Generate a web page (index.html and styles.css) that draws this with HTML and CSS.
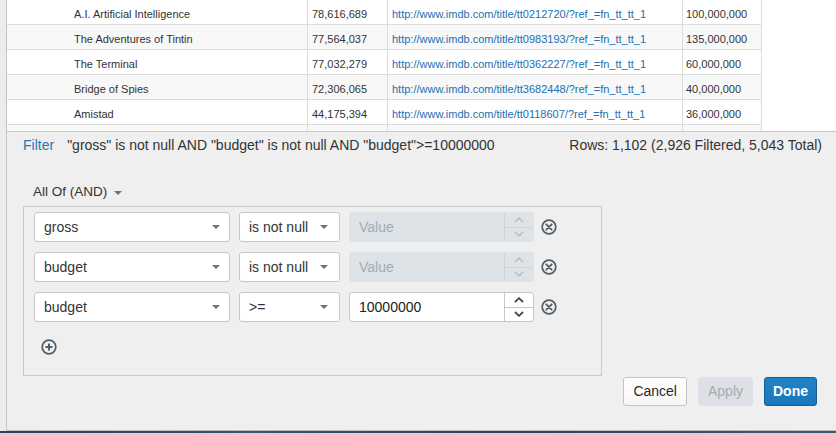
FILE: index.html
```html
<!DOCTYPE html>
<html lang="en">
<head>
<meta charset="utf-8">
<title>Filter</title>
<link rel="stylesheet" href="styles.css">
</head>
<body>
<div class="screen">
  <div class="window">
    <div class="gutter"></div>
    <div class="main">
      <div class="grid">
        <div class="row">
          <div class="cell c-title">A.I. Artificial Intelligence</div>
          <div class="cell c-num">78,616,689</div>
          <div class="cell c-link"><a>http://www.imdb.com/title/tt0212720/?ref_=fn_tt_tt_1</a></div>
          <div class="cell c-budget">100,000,000</div>
        </div>
        <div class="row stripe">
          <div class="cell c-title">The Adventures of Tintin</div>
          <div class="cell c-num">77,564,037</div>
          <div class="cell c-link"><a>http://www.imdb.com/title/tt0983193/?ref_=fn_tt_tt_1</a></div>
          <div class="cell c-budget">135,000,000</div>
        </div>
        <div class="row">
          <div class="cell c-title">The Terminal</div>
          <div class="cell c-num">77,032,279</div>
          <div class="cell c-link"><a>http://www.imdb.com/title/tt0362227/?ref_=fn_tt_tt_1</a></div>
          <div class="cell c-budget">60,000,000</div>
        </div>
        <div class="row stripe">
          <div class="cell c-title">Bridge of Spies</div>
          <div class="cell c-num">72,306,065</div>
          <div class="cell c-link"><a>http://www.imdb.com/title/tt3682448/?ref_=fn_tt_tt_1</a></div>
          <div class="cell c-budget">40,000,000</div>
        </div>
        <div class="row">
          <div class="cell c-title">Amistad</div>
          <div class="cell c-num">44,175,394</div>
          <div class="cell c-link"><a>http://www.imdb.com/title/tt0118607/?ref_=fn_tt_tt_1</a></div>
          <div class="cell c-budget">36,000,000</div>
        </div>
        <div class="row stripe">
          <div class="cell c-title"></div>
          <div class="cell c-num"></div>
          <div class="cell c-link"></div>
          <div class="cell c-budget"></div>
        </div>
      </div>

      <div class="panel">
        <div class="summary">
          <div class="expr"><span class="filter-label">Filter</span><span class="expr-text">"gross" is not null AND "budget" is not null AND "budget"&gt;=10000000</span></div>
          <div class="count">Rows: 1,102 (2,926 Filtered, 5,043 Total)</div>
        </div>

        <div class="logic">All Of (AND)<span class="caret caret-logic"></span></div>

        <div class="group">
          <div class="cond">
            <div class="select field-select"><span>gross</span><span class="caret"></span></div>
            <div class="select op-select"><span>is not null</span><span class="caret"></span></div>
            <div class="num disabled">
              <span class="num-value placeholder">Value</span>
              <span class="spin">
                <span class="spin-btn"><svg width="10" height="6" viewBox="0 0 10 6"><path d="M1 5 L5 1.2 L9 5" fill="none" stroke="currentColor" stroke-width="1.6"/></svg></span>
                <span class="spin-btn"><svg width="10" height="6" viewBox="0 0 10 6"><path d="M1 1 L5 4.8 L9 1" fill="none" stroke="currentColor" stroke-width="1.6"/></svg></span>
              </span>
            </div>
            <span class="remove"><svg width="16" height="16" viewBox="0 0 16 16"><circle cx="8" cy="8" r="6.8" fill="none" stroke="currentColor" stroke-width="1.7"/><path d="M5.3 5.3 L10.7 10.7 M10.7 5.3 L5.3 10.7" stroke="currentColor" stroke-width="1.8" stroke-linecap="round"/></svg></span>
          </div>
          <div class="cond">
            <div class="select field-select"><span>budget</span><span class="caret"></span></div>
            <div class="select op-select"><span>is not null</span><span class="caret"></span></div>
            <div class="num disabled">
              <span class="num-value placeholder">Value</span>
              <span class="spin">
                <span class="spin-btn"><svg width="10" height="6" viewBox="0 0 10 6"><path d="M1 5 L5 1.2 L9 5" fill="none" stroke="currentColor" stroke-width="1.6"/></svg></span>
                <span class="spin-btn"><svg width="10" height="6" viewBox="0 0 10 6"><path d="M1 1 L5 4.8 L9 1" fill="none" stroke="currentColor" stroke-width="1.6"/></svg></span>
              </span>
            </div>
            <span class="remove"><svg width="16" height="16" viewBox="0 0 16 16"><circle cx="8" cy="8" r="6.8" fill="none" stroke="currentColor" stroke-width="1.7"/><path d="M5.3 5.3 L10.7 10.7 M10.7 5.3 L5.3 10.7" stroke="currentColor" stroke-width="1.8" stroke-linecap="round"/></svg></span>
          </div>
          <div class="cond">
            <div class="select field-select"><span>budget</span><span class="caret"></span></div>
            <div class="select op-select"><span>&gt;=</span><span class="caret"></span></div>
            <div class="num">
              <span class="num-value">10000000</span>
              <span class="spin">
                <span class="spin-btn"><svg width="10" height="6" viewBox="0 0 10 6"><path d="M1 5 L5 1.2 L9 5" fill="none" stroke="currentColor" stroke-width="1.8"/></svg></span>
                <span class="spin-btn"><svg width="10" height="6" viewBox="0 0 10 6"><path d="M1 1 L5 4.8 L9 1" fill="none" stroke="currentColor" stroke-width="1.8"/></svg></span>
              </span>
            </div>
            <span class="remove"><svg width="16" height="16" viewBox="0 0 16 16"><circle cx="8" cy="8" r="6.8" fill="none" stroke="currentColor" stroke-width="1.7"/><path d="M5.3 5.3 L10.7 10.7 M10.7 5.3 L5.3 10.7" stroke="currentColor" stroke-width="1.8" stroke-linecap="round"/></svg></span>
          </div>
          <span class="add"><svg width="16" height="16" viewBox="0 0 16 16"><circle cx="8" cy="8" r="6.8" fill="none" stroke="currentColor" stroke-width="1.7"/><path d="M8 4.5 V11.5 M4.5 8 H11.5" stroke="currentColor" stroke-width="2"/></svg></span>
        </div>

        <div class="actions">
          <button class="btn btn-cancel">Cancel</button>
          <button class="btn btn-apply">Apply</button>
          <button class="btn btn-done">Done</button>
        </div>
      </div>
    </div>
  </div>
  <div class="taskbar"></div>
</div>
</body>
</html>
```

FILE: styles.css
```css
* { box-sizing: border-box; }

html, body {
  margin: 0;
  padding: 0;
}

body {
  width: 836px;
  height: 433px;
  overflow: hidden;
  font-family: "Liberation Sans", Arial, sans-serif;
  color: #333;
  background: #efefef;
}

.screen {
  display: flex;
  flex-direction: column;
  height: 433px;
}

.window {
  display: flex;
  height: 431px;
}

.gutter {
  width: 7px;
  background: #ececec;
  border-right: 1px solid #c6c6c6;
}

.main {
  flex: 1;
  display: flex;
  flex-direction: column;
  border-bottom: 1px solid #bdbdbd;
}

.taskbar {
  height: 2px;
  background: linear-gradient(90deg, #27445a, #35566e 30%, #2a4760 60%, #3a5a72);
}

/* ---------- data grid ---------- */
.grid {
  height: 131px;
  overflow: hidden;
  background: #fff;
}

.row {
  display: flex;
  width: 755px;
  height: 25px;
  border-bottom: 1px solid #dcdcdc;
  font-size: 11px;
  line-height: 20px;
}

.row.stripe { background: #f8f8f8; }

.cell {
  padding-top: 4px;
  border-right: 1px solid #dcdcdc;
  white-space: nowrap;
  overflow: hidden;
}

.c-title { width: 301px; padding-left: 67px; }
.c-num { width: 80px; padding-left: 4px; }
.c-link { width: 295px; padding-left: 4px; }
.c-budget { width: 79px; padding-left: 3px; }

.c-link a { color: #2270b0; }

/* ---------- filter panel ---------- */
.panel {
  flex: 1;
  background: #efefef;
  border-top: 1px solid #c8c8c8;
  padding: 3px 14px 0 16px;
  display: flex;
  flex-direction: column;
}

.summary {
  display: flex;
  justify-content: space-between;
  font-size: 14px;
  line-height: 20px;
  white-space: nowrap;
}

.filter-label {
  color: #2477b8;
  margin-right: 13px;
}

.logic {
  margin-top: 27px;
  padding-left: 10px;
  font-size: 13.5px;
  line-height: 20px;
  display: flex;
  align-items: center;
}

.caret {
  width: 0;
  height: 0;
  border-left: 4px solid transparent;
  border-right: 4px solid transparent;
  border-top: 4px solid #69737d;
}

.caret-logic { margin-left: 7px; margin-top: 1px; }

.group {
  margin-top: 4px;
  width: 579px;
  height: 170px;
  border: 1px solid #c9c9c9;
  padding: 5px 10px;
  display: flex;
  flex-direction: column;
  gap: 10px;
}

.cond {
  display: flex;
  align-items: center;
  height: 30px;
}

.select {
  height: 30px;
  border: 1px solid #c6c6c6;
  border-radius: 3px;
  background: #fff;
  display: flex;
  align-items: center;
  justify-content: space-between;
  padding: 0 9px 0 9px;
  font-size: 14px;
  margin-right: 9px;
}

.field-select { width: 196px; }
.op-select { width: 101px; padding-right: 11px; }

.num {
  width: 185px;
  height: 30px;
  border: 1px solid #c6c6c6;
  border-radius: 3px;
  background: #fff;
  display: flex;
  font-size: 14px;
  color: #222;
}

.num-value {
  flex: 1;
  padding-left: 9px;
  line-height: 28px;
}

.spin {
  width: 29px;
  border-left: 1px solid #c6c6c6;
  display: flex;
  flex-direction: column;
  color: #3e4852;
}

.spin-btn {
  flex: 1;
  display: flex;
  align-items: center;
  justify-content: center;
}

.spin-btn + .spin-btn { border-top: 1px solid #c6c6c6; }

.num.disabled {
  background: #dee3e7;
  border-color: #dee3e7;
}

.num.disabled .spin { border-left-color: #cfd5da; color: #b7bfc7; }
.num.disabled .spin-btn + .spin-btn { border-top-color: #cfd5da; }

.placeholder { color: #a3abb3; }

.remove {
  margin-left: 7px;
  width: 16px;
  height: 16px;
  color: #505c68;
  display: flex;
}

.add {
  margin-top: 7px;
  margin-left: 7px;
  width: 16px;
  height: 16px;
  color: #505c68;
  display: flex;
}

.actions {
  margin-top: 1px;
  padding-right: 5px;
  display: flex;
  justify-content: flex-end;
  gap: 11px;
}

.btn {
  height: 29px;
  padding: 0 9px;
  border-radius: 3px;
  font-family: "Liberation Sans", Arial, sans-serif;
  font-size: 14px;
  line-height: 27px;
  border: 1px solid #c4c4c4;
}

.btn-cancel {
  background: linear-gradient(#ffffff, #f6f6f6);
  color: #2a2a2a;
}

.btn-apply {
  background: #dde1e5;
  border-color: #dde1e5;
  color: #a5abb1;
}

.btn-done {
  padding: 0 8px;
  background: linear-gradient(#2283c8, #1976ba);
  border-color: #135e98;
  color: #fff;
  font-weight: bold;
}
```
